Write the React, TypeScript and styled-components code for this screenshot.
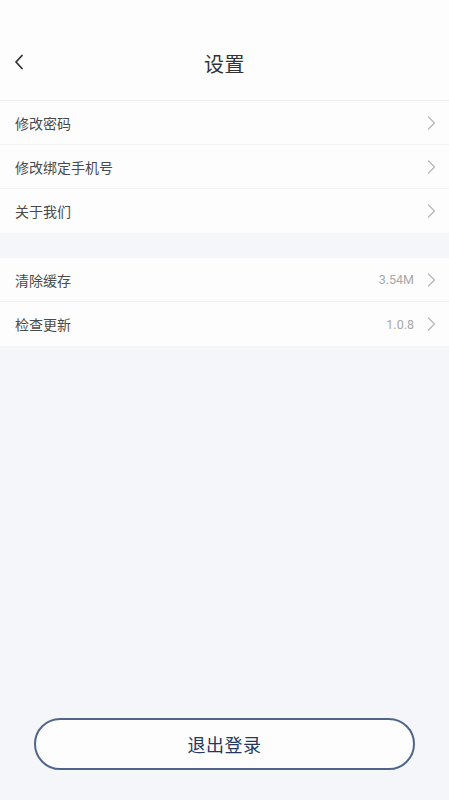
import React from "react";
import styled, { createGlobalStyle } from "styled-components";

const Global = createGlobalStyle`
  html, body { margin: 0; padding: 0; }
  body {
    background: #f4f6f9;
    font-family: "Noto Sans CJK SC", "Noto Sans", sans-serif;
  }
`;

const Page = styled.div`
  width: 449px;
  height: 800px;
  background: #f4f6f9;
  display: flex;
  flex-direction: column;
`;

const Header = styled.header`
  height: 101px;
  background: #fdfdfd;
  display: flex;
  align-items: flex-end;
  border-bottom: 1px solid #eff0f2;
  box-sizing: border-box;
`;

const HeaderInner = styled.div`
  height: 74px;
  width: 100%;
  display: grid;
  grid-template-columns: 60px 1fr 60px;
  align-items: center;
  box-sizing: border-box;
`;

const BackButton = styled.div`
  padding-left: 13px;
  display: flex;
  align-items: center;
  height: 100%;
  padding-bottom: 2px;
  box-sizing: border-box;
`;

const Title = styled.h1`
  margin: 0;
  text-align: center;
  font-size: 20px;
  font-weight: 400;
  color: #333333;
  letter-spacing: 0.5px;
`;

const Group = styled.section<{ $gap?: number }>`
  background: #fdfdfd;
  margin-top: ${(p) => p.$gap ?? 0}px;
  display: flex;
  flex-direction: column;
`;

const Row = styled.div<{ $last?: boolean }>`
  height: 44px;
  display: flex;
  align-items: center;
  padding: 0 13px 0 15px;
  border-bottom: ${(p) => (p.$last ? "none" : "1px solid #f1f2f4")};
  box-sizing: border-box;
`;

const Label = styled.span`
  flex: 1;
  font-size: 14px;
  color: #4a4a4a;
`;

const Value = styled.span`
  font-size: 12.5px;
  color: #a8a8a8;
  margin-right: 13px;
  font-family: "Roboto", "Noto Sans", sans-serif;
`;

const Spacer = styled.div`
  flex: 1;
`;

const Footer = styled.div`
  padding: 0 34px 30px 34px;
`;

const LogoutButton = styled.button`
  width: 100%;
  height: 52px;
  border-radius: 26px;
  border: 2px solid #4f6689;
  background: #fdfdfd;
  color: #24395e;
  font-size: 18px;
  font-family: "Noto Sans CJK SC", sans-serif;
  letter-spacing: 0.5px;
  display: flex;
  align-items: center;
  justify-content: center;
  padding: 0;
`;

const Chevron = () => (
  <svg width="9" height="14" viewBox="0 0 9 14" fill="none">
    <path d="M1.5 1 L7.5 7 L1.5 13" stroke="#b5b5b5" strokeWidth="1.2" strokeLinecap="round" strokeLinejoin="round" />
  </svg>
);

const BackIcon = () => (
  <svg width="12" height="16" viewBox="0 0 12 16" fill="none">
    <path d="M9 1.5 L3 8 L9 14.5" stroke="#333" strokeWidth="1.8" strokeLinecap="round" strokeLinejoin="round" />
  </svg>
);

type Item = { label: string; value?: string };

const group1: Item[] = [
  { label: "修改密码" },
  { label: "修改绑定手机号" },
  { label: "关于我们" },
];
const group2: Item[] = [
  { label: "清除缓存", value: "3.54M" },
  { label: "检查更新", value: "1.0.8" },
];

const renderRows = (items: Item[]) =>
  items.map((it, i) => (
    <Row key={it.label} $last={i === items.length - 1}>
      <Label>{it.label}</Label>
      {it.value && <Value>{it.value}</Value>}
      <Chevron />
    </Row>
  ));

export default function App() {
  return (
    <>
      <Global />
      <Page>
        <Header>
          <HeaderInner>
            <BackButton>
              <BackIcon />
            </BackButton>
            <Title>设置</Title>
            <div />
          </HeaderInner>
        </Header>
        <Group>{renderRows(group1)}</Group>
        <Group $gap={25}>{renderRows(group2)}</Group>
        <Spacer />
        <Footer>
          <LogoutButton>退出登录</LogoutButton>
        </Footer>
      </Page>
    </>
  );
}
